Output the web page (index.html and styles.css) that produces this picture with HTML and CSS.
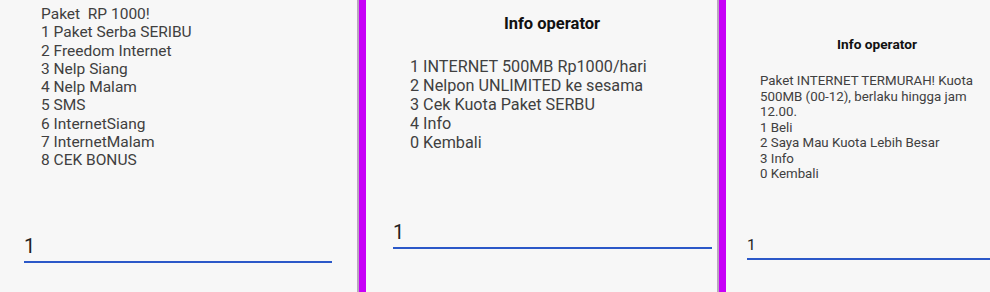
FILE: index.html
```html
<!DOCTYPE html>
<html>
<head>
<meta charset="utf-8">
<link rel="stylesheet" href="styles.css">
</head>
<body>
<div class="strip">
  <section class="panel p1">
    <div class="msg">
      <div>Paket&nbsp; RP 1000!</div>
      <div>1 Paket Serba SERIBU</div>
      <div>2 Freedom Internet</div>
      <div>3 Nelp Siang</div>
      <div>4 Nelp Malam</div>
      <div>5 SMS</div>
      <div>6 InternetSiang</div>
      <div>7 InternetMalam</div>
      <div>8 CEK BONUS</div>
    </div>
    <div class="field">1</div>
  </section>
  <div class="sep"></div>
  <section class="panel p2">
    <div class="title">Info operator</div>
    <div class="msg">
      <div>1 INTERNET 500MB Rp1000/hari</div>
      <div>2 Nelpon UNLIMITED ke sesama</div>
      <div>3 Cek Kuota Paket SERBU</div>
      <div>4 Info</div>
      <div>0 Kembali</div>
    </div>
    <div class="field">1</div>
  </section>
  <div class="sep"></div>
  <section class="panel p3">
    <div class="title">Info operator</div>
    <div class="msg">
      <div>Paket INTERNET TERMURAH! Kuota 500MB (00-12), berlaku hingga jam 12.00.</div>
      <div>1 Beli</div>
      <div>2 Saya Mau Kuota Lebih Besar</div>
      <div>3 Info</div>
      <div>0 Kembali</div>
    </div>
    <div class="field">1</div>
  </section>
</div>
</body>
</html>
```
FILE: styles.css
```css
html, body {
  margin: 0;
  padding: 0;
  background: #f7f7f7;
}
body {
  width: 990px;
  height: 292px;
  overflow: hidden;
  font-family: Roboto, "Liberation Sans", sans-serif;
}
.strip {
  display: flex;
  height: 292px;
}
.panel {
  background: #f7f7f7;
  display: flex;
  flex-direction: column;
  overflow: hidden;
}
.sep {
  flex: none;
  width: 7px;
  background: #c800f8;
  border-left: 2px solid #b8a6be;
}
.msg {
  color: #404040;
}
.field {
  color: #222;
  border-bottom: 2px solid #2b58c8;
}

/* panel 1 */
.p1 {
  width: 357px;
  flex: none;
}
.p1 .msg {
  padding: 5px 0 0 41px;
  font-size: 15.5px;
  line-height: 18.3px;
}
.p1 .field {
  margin: 64px 25px 0 24px;
  font-size: 20px;
  line-height: 24px;
  padding-bottom: 3px;
}

/* panel 2 */
.p2 {
  width: 351px;
  flex: none;
}
.p2 .title {
  padding: 13px 0 0 21px;
  text-align: center;
  font-weight: bold;
  font-size: 16.5px;
  line-height: 22px;
  color: #111;
}
.p2 .msg {
  padding: 22px 0 0 44px;
  font-size: 16.2px;
  line-height: 19px;
}
.p2 .field {
  margin: 68px 5px 0 27px;
  font-size: 20px;
  line-height: 24px;
  padding-bottom: 3px;
}

/* panel 3 */
.p3 {
  flex: 1;
  min-width: 0;
}
.p3 .title {
  padding: 35px 0 0 0;
  width: 302px;
  text-align: center;
  font-weight: bold;
  font-size: 13.7px;
  line-height: 18px;
  color: #111;
}
.p3 .msg {
  padding: 20px 0 0 34px;
  width: 226px;
  font-size: 13.3px;
  line-height: 15.5px;
}
.p3 .field {
  margin: 53.5px 0 0 21px;
  font-size: 15.5px;
  line-height: 20px;
  padding-bottom: 3px;
}
```
